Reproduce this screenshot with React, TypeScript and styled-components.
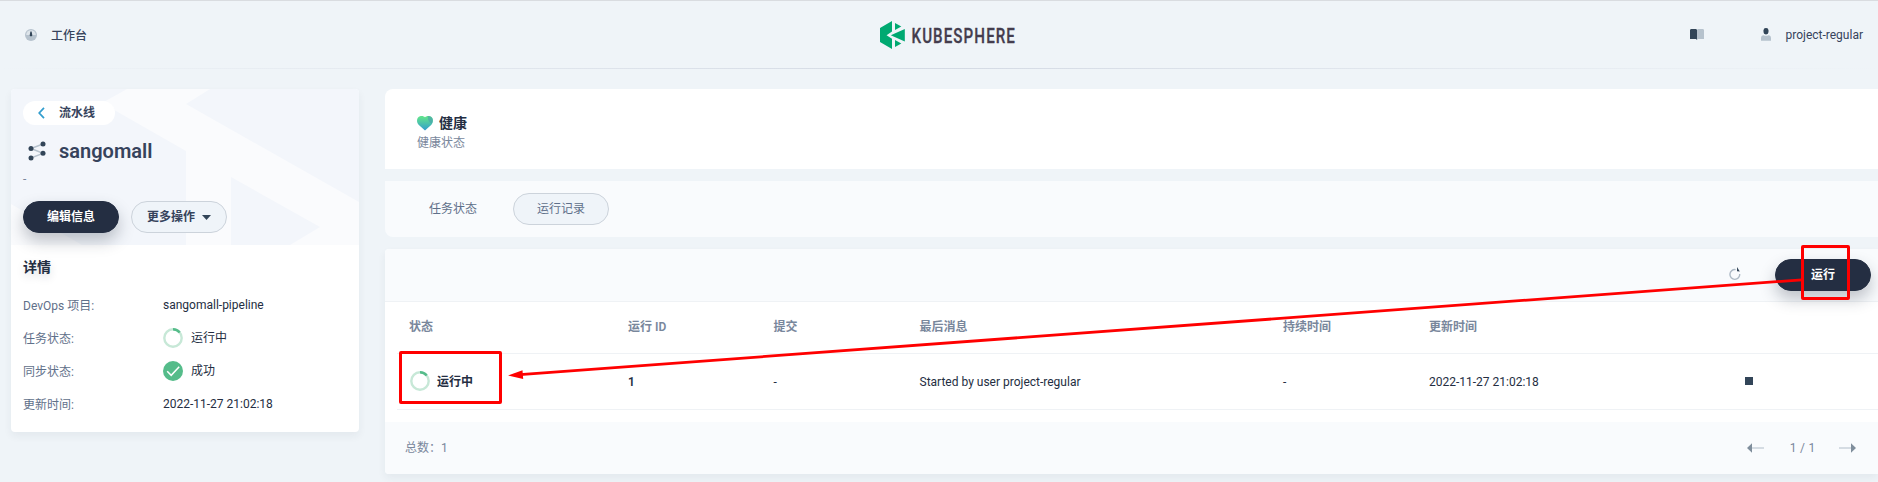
import React from 'react';
import styled, { createGlobalStyle, css } from 'styled-components';

const Global = createGlobalStyle`
  *, *::before, *::after { box-sizing: border-box; }
  html, body { margin: 0; padding: 0; overflow: hidden; }
  body {
    background: #eff4f8;
    color: #242e42;
    font-family: Roboto, "Noto Sans CJK SC", sans-serif;
    font-size: 12px;
    line-height: 20px;
  }
  svg { display: block; flex: none; overflow: visible; }
`;

const Page = styled.div`
  position: relative;
  width: 1878px;
  height: 482px;
  overflow: hidden;
  border-top: 1px solid #d9dce0;
`;

const Header = styled.header`
  display: grid;
  grid-template-columns: 880px 1fr auto;
  align-items: center;
  height: 68px;
  padding-right: 15px;
  border-bottom: 1px solid;
  border-image: linear-gradient(to right, rgba(210, 216, 226, 0) 0%, #d4dae4 50%, rgba(210, 216, 226, 0) 100%) 1;
`;

const HeaderNav = styled.div`
  display: flex;
  align-items: center;
  gap: 14px;
  padding-left: 25px;
  color: #36435c;
  font-weight: 500;
`;

const NavLabel = styled.span`
  padding-top: 2px;
`;

const HeaderActions = styled.div`
  display: flex;
  align-items: center;
  color: #36435c;
`;

const User = styled.div`
  display: flex;
  align-items: center;
  gap: 15px;
  margin-left: 57px;
`;

const Body = styled.div`
  display: flex;
  align-items: flex-start;
  gap: 26px;
  padding: 20px 0 0 11px;
`;

const SideCard = styled.aside`
  flex: none;
  width: 348px;
  height: 343px;
  border-radius: 4px;
  background: #fff;
  box-shadow: 0 4px 8px rgba(36, 46, 66, 0.06);
`;

const Summary = styled.div`
  position: relative;
  height: 156px;
  padding: 12px;
  border-radius: 4px 4px 0 0;
  background: #f3f6fb;
`;

const Pattern = styled.svg`
  position: absolute;
  top: 0;
  left: 0;
  border-radius: 4px 4px 0 0;
`;

const SummaryContent = styled.div`
  position: relative;
`;

const BackLink = styled.a`
  display: flex;
  align-items: center;
  gap: 14px;
  width: 92px;
  height: 24px;
  padding-left: 15px;
  border-radius: 12px;
  background: #fff;
  color: #36435c;
  font-weight: 600;
`;

const Title = styled.h1`
  display: flex;
  align-items: center;
  gap: 13px;
  height: 28px;
  margin: 12px 0 0;
  padding-left: 5px;
  color: #36435c;
  font-size: 20px;
  font-weight: 600;
  line-height: 28px;
`;

const Description = styled.p`
  margin: 4px 0 0;
  height: 32px;
  color: #79879c;
`;

const ButtonRow = styled.div`
  display: flex;
  gap: 12px;
`;

const Button = styled.button<{ $dark?: boolean }>`
  display: flex;
  align-items: center;
  justify-content: center;
  gap: 7px;
  width: 96px;
  height: 32px;
  padding: 0;
  border: 1px solid #ccd3db;
  border-radius: 16px;
  background: #eff4f9;
  color: #36435c;
  font: 600 12px/20px Roboto, "Noto Sans CJK SC", sans-serif;
  ${(p) =>
    p.$dark &&
    css`
      border-color: #242e42;
      background: #242e42;
      color: #fff;
      box-shadow: 0 8px 16px rgba(36, 46, 66, 0.28);
    `}
`;

const Details = styled.div`
  padding: 12px 12px 0;
`;

const DetailsTitle = styled.h2`
  margin: 0 0 11px;
  font-size: 14px;
  font-weight: 600;
  line-height: 20px;
  text-shadow: 0 4px 8px rgba(36, 46, 66, 0.15);
`;

const DetailRow = styled.div`
  display: flex;
  align-items: center;
  height: 33px;
  padding-top: 1px;
`;

const DetailLabel = styled.div`
  width: 140px;
  padding-top: 2px;
  color: #5f708a;
`;

const Status = styled.div`
  display: flex;
  align-items: center;
  gap: 8px;
`;

const RunStatus = styled(Status)`
  padding-left: 1px;
  gap: 7px;
`;

const Main = styled.main`
  display: flex;
  flex: 1;
  flex-direction: column;
  gap: 12px;
`;

const HealthCard = styled.section`
  height: 80px;
  padding: 24px 32px;
  border-radius: 8px 0 0 0;
  background: #fff;
`;

const HealthTitle = styled.div`
  display: flex;
  align-items: center;
  gap: 6px;
  height: 20px;
  font-size: 14px;
  font-weight: 600;
`;

const HealthText = styled.div`
  line-height: 20px;
  color: #79879c;
`;

const Tabs = styled.nav`
  display: flex;
  align-items: center;
  gap: 12px;
  height: 56px;
  padding-left: 20px;
  border-radius: 0 0 0 8px;
  background: #f9fbfd;
`;

const Tab = styled.div<{ $active?: boolean }>`
  width: 96px;
  height: 32px;
  border: 1px solid ${(p) => (p.$active ? '#ccd3db' : 'transparent')};
  border-radius: 16px;
  background: ${(p) => (p.$active ? '#eff4f9' : 'transparent')};
  color: #5f708a;
  line-height: 30px;
  text-align: center;
`;

const TableCard = styled.section`
  height: 225px;
  border-radius: 4px;
  background: #fff;
  box-shadow: 0 4px 8px rgba(36, 46, 66, 0.06);
`;

const Toolbar = styled.div`
  display: flex;
  align-items: center;
  justify-content: flex-end;
  gap: 34px;
  height: 53px;
  padding-right: 7px;
  border-bottom: 1px solid #eff2f5;
  border-radius: 4px 0 0 0;
  background: #f9fbfd;
`;

const Refresh = styled.span`
  padding-bottom: 3px;
`;

const TableBody = styled.div`
  height: 120px;
  padding-left: 12px;
`;

const Row = styled.div<{ $head?: boolean }>`
  display: grid;
  grid-template-columns: 219px 145.5px 146px 363.5px 146px 316px 1fr;
  align-items: center;
  height: ${(p) => (p.$head ? 52 : 56)}px;
  padding-left: 12px;
  padding-bottom: ${(p) => (p.$head ? 2 : 1)}px;
  border-bottom: 1px solid #eff2f5;
  color: ${(p) => (p.$head ? '#79879c' : '#242e42')};
  font-weight: ${(p) => (p.$head ? 600 : 400)};
`;

const Cell = styled.span<{ $strong?: boolean }>`
  padding-top: 2px;
  font-weight: ${(p) => (p.$strong ? 600 : 400)};
`;

const StopSquare = styled.i`
  width: 8px;
  height: 8px;
  background: #324558;
`;

const Footer = styled.div`
  display: flex;
  align-items: center;
  justify-content: space-between;
  height: 52px;
  padding: 0 22px 0 20px;
  border-radius: 0 0 0 4px;
  background: #f9fbfd;
  color: #79879c;
`;

const Pager = styled.div`
  display: flex;
  align-items: center;
  justify-content: space-between;
  width: 109px;
`;

const PageCount = styled.span`
  padding-left: 2px;
  word-spacing: 0.5px;
`;

const Annotations = styled.svg`
  position: absolute;
  top: -1px;
  left: 0;
  pointer-events: none;
`;

const Spinner = () => (
  <svg width="20" height="20" viewBox="0 0 20 20" fill="none" strokeWidth="2.4">
    <circle cx="10" cy="10" r="8.7" stroke="#c7e8d7" />
    <path d="M10 1.3A8.7 8.7 0 0 1 16.7 4.5" stroke="#55bc8a" />
  </svg>
);

const SuccessIcon = () => (
  <svg width="20" height="20" viewBox="0 0 20 20" fill="none">
    <circle cx="10" cy="10" r="10" fill="#55bc8a" />
    <path d="M4.2 10.2L8.2 14.3L16.2 5.8" stroke="#fff" strokeWidth="1.5" />
  </svg>
);

const DashboardIcon = () => (
  <svg width="12" height="12" viewBox="0 0 12 12">
    <circle cx="6" cy="6" r="6" fill="#b6c2cd" />
    <path d="M1.2 6a4.8 4.8 0 0 1 9.6 0z" fill="#dde4ea" />
    <path d="M5.4 2.5h1.2L7.2 5.6A1.3 1.3 0 1 1 4.8 5.6z" fill="#324558" />
  </svg>
);

const BookIcon = () => (
  <svg width="14" height="11" viewBox="0 0 14 11">
    <path d="M0 .8L1 0h5l1 .8V11L6 10H0z" fill="#324558" />
    <path d="M7 .8L8 0h5l1 .8V10H8L7 11z" fill="#b6c2cd" />
  </svg>
);

const UserIcon = () => (
  <svg width="10" height="13" viewBox="0 0 10 13">
    <rect x="2.5" y="0" width="5" height="6.4" rx="2.4" fill="#324558" />
    <path d="M0 12.8V10.2Q0 7.4 2.6 7.2Q5 8.2 7.4 7.2Q10 7.4 10 10.2V12.8z" fill="#b6c2cd" />
  </svg>
);

const PipelineIcon = () => (
  <svg width="18" height="20" viewBox="0 0 18 20">
    <path d="M3 7.5L15 3M3 7.5L15 12.3L3 17" fill="none" stroke="#b6c2cd" strokeWidth="1.4" />
    <g fill="#324558">
      <circle cx="15" cy="3" r="2.5" />
      <circle cx="3" cy="7.5" r="2.5" />
      <circle cx="15" cy="12.3" r="2.5" />
      <circle cx="3" cy="17" r="2.5" />
    </g>
  </svg>
);

const HeartIcon = () => (
  <svg width="16" height="16" viewBox="0 0 16 16">
    <defs>
      <linearGradient id="heart" x1="0" y1="0" x2="0" y2="1">
        <stop offset="0.1" stopColor="#5fe08f" />
        <stop offset="1" stopColor="#329dce" />
      </linearGradient>
    </defs>
    <path d="M8 15.4L1.6 9.8C-1 6.6 -.2 2.2 3 1.2C5 .5 7 1.1 8 2.3C9 1.1 11 .5 13 1.2C16.2 2.2 17 6.6 14.4 9.8z" fill="url(#heart)" />
    <path d="M11 .9C13.5 .7 15.3 2 15.8 4.2C15.9 6 15.4 7.5 14.8 8.5C12 7.5 10.3 4 11 .9z" fill="#4a9fae" opacity=".6" />
  </svg>
);

const Logo = () => (
  <svg width="136" height="28" viewBox="0 0 136 28">
    <g fill="#00a971">
      <path d="M12 0V10.6L6.6 14.2L12 17.8V28L0 21V7z" />
      <path d="M15 2V9L21.3 5.6z" />
      <path d="M24.8 8V20.6L10.8 14.2z" />
      <path d="M15 19V26L21.3 22.4z" />
    </g>
    <text
      x="31.5"
      y="21.6"
      fill="#443d4e"
      stroke="#443d4e"
      strokeWidth="0.3"
      strokeLinejoin="round"
      fontFamily="Roboto, sans-serif"
      fontWeight="500"
      fontSize="21"
      letterSpacing="1.5"
      textLength="104.5"
      lengthAdjust="spacingAndGlyphs"
    >
      KUBESPHERE
    </text>
  </svg>
);

const RefreshIcon = () => (
  <svg width="12" height="14" viewBox="0 0 12 14">
    <path d="M6.6 2.6A4.9 4.9 0 1 0 10.7 7" fill="none" stroke="#adb9c5" strokeWidth="1.4" />
    <path d="M8 0V4.2L10.8 4.6z" fill="#324558" />
  </svg>
);

const PageArrow = ({ next }: { next?: boolean }) => (
  <svg width="17" height="10" viewBox="0 0 17 10" transform={next ? 'scale(-1 1)' : undefined}>
    <path d="M5 5H17" stroke="#d5dce3" strokeWidth="2" />
    <path d="M0 5L5 .2V9.8z" fill="#7f8e9c" />
  </svg>
);

const details = [
  { label: 'DevOps 项目:', value: 'sangomall-pipeline' },
  { label: '任务状态:', value: '运行中', icon: <Spinner /> },
  { label: '同步状态:', value: '成功', icon: <SuccessIcon /> },
  { label: '更新时间:', value: '2022-11-27 21:02:18' },
];

const columns = ['状态', '运行 ID', '提交', '最后消息', '持续时间', '更新时间', ''];

export default function App() {
  return (
    <>
      <Global />
      <Page>
        <Header>
          <HeaderNav>
            <DashboardIcon />
            <NavLabel>工作台</NavLabel>
          </HeaderNav>
          <Logo />
          <HeaderActions>
            <BookIcon />
            <User>
              <UserIcon />
              project-regular
            </User>
          </HeaderActions>
        </Header>
        <Body>
          <SideCard>
            <Summary>
              <Pattern width="348" height="156" viewBox="0 0 348 156" fill="#fafbfd">
                <path d="M116 0H199L175 15L348 113V156H279L309 138L220 88V156H175V62L91 14z" />
                <path d="M0 115L71 156H0z" />
              </Pattern>
              <SummaryContent>
                <BackLink>
                  <svg width="7" height="12" viewBox="0 0 7 12" fill="none">
                    <path d="M6 .8L1.2 6L6 11.2" stroke="#329dce" strokeWidth="1.7" />
                  </svg>
                  流水线
                </BackLink>
                <Title>
                  <PipelineIcon />
                  sangomall
                </Title>
                <Description>-</Description>
                <ButtonRow>
                  <Button $dark>编辑信息</Button>
                  <Button>
                    更多操作
                    <svg width="9" height="5" viewBox="0 0 9 5">
                      <path d="M0 0H9L4.5 5z" fill="#324558" />
                    </svg>
                  </Button>
                </ButtonRow>
              </SummaryContent>
            </Summary>
            <Details>
              <DetailsTitle>详情</DetailsTitle>
              {details.map((d) => (
                <DetailRow key={d.label}>
                  <DetailLabel>{d.label}</DetailLabel>
                  <Status>
                    {d.icon}
                    {d.value}
                  </Status>
                </DetailRow>
              ))}
            </Details>
          </SideCard>
          <Main>
            <HealthCard>
              <HealthTitle>
                <HeartIcon />
                健康
              </HealthTitle>
              <HealthText>健康状态</HealthText>
            </HealthCard>
            <Tabs>
              <Tab>任务状态</Tab>
              <Tab $active>运行记录</Tab>
            </Tabs>
            <TableCard>
              <Toolbar>
                <Refresh>
                  <RefreshIcon />
                </Refresh>
                <Button $dark>运行</Button>
              </Toolbar>
              <TableBody>
                <Row $head>
                  {columns.map((c) => (
                    <span key={c}>{c}</span>
                  ))}
                </Row>
                <Row>
                  <RunStatus>
                    <Spinner />
                    <Cell $strong>运行中</Cell>
                  </RunStatus>
                  <Cell $strong>1</Cell>
                  <Cell>-</Cell>
                  <Cell>Started by user project-regular</Cell>
                  <Cell>-</Cell>
                  <Cell>2022-11-27 21:02:18</Cell>
                  <StopSquare />
                </Row>
              </TableBody>
              <Footer>
                <span>总数：1</span>
                <Pager>
                  <PageArrow />
                  <PageCount>1 / 1</PageCount>
                  <PageArrow next />
                </Pager>
              </Footer>
            </TableCard>
          </Main>
        </Body>
        <Annotations width="1878" height="482" viewBox="0 0 1878 482">
          <g fill="none" stroke="#f00" strokeWidth="3">
            <rect x="400.5" y="352.5" width="100" height="50" rx="0.5" />
            <rect x="1802.5" y="246.5" width="46" height="52" rx="0.5" />
            <path d="M1802 279.8L520 374.6" strokeWidth="2.8" />
          </g>
          <path d="M508 375.4L522.5 370.2L523.2 379z" fill="#f00" />
        </Annotations>
      </Page>
    </>
  );
}
